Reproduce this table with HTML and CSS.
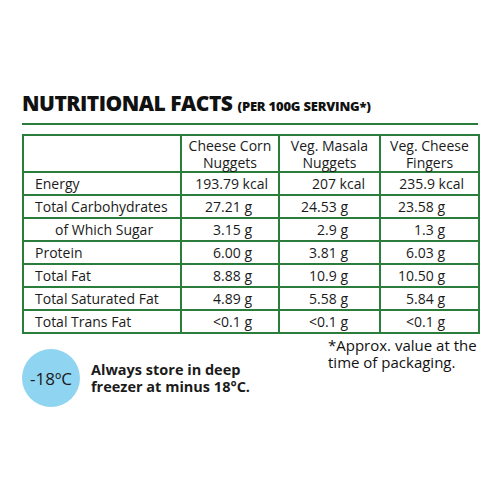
FILE: index.html
```html
<!DOCTYPE html>
<html>
<head>
<meta charset="utf-8">
<link rel="stylesheet" href="styles.css">
</head>
<body>
<div class="page">
  <h1 class="title">NUTRITIONAL FACTS <span class="sub">(PER 100G SERVING*)</span></h1>
  <div class="rule"></div>
  <table class="facts">
    <colgroup>
      <col class="c1"><col class="c2"><col class="c3"><col class="c4">
    </colgroup>
    <thead>
      <tr>
        <th></th>
        <th>Cheese Corn<br>Nuggets</th>
        <th>Veg. Masala<br>Nuggets</th>
        <th>Veg. Cheese<br>Fingers</th>
      </tr>
    </thead>
    <tbody>
      <tr class="energy"><td>Energy</td><td>193.79 kcal</td><td>207 kcal</td><td>235.9 kcal</td></tr>
      <tr><td>Total Carbohydrates</td><td>27.21 g</td><td>24.53 g</td><td>23.58 g</td></tr>
      <tr><td class="indent">of Which Sugar</td><td>3.15 g</td><td>2.9 g</td><td>1.3 g</td></tr>
      <tr><td>Protein</td><td>6.00 g</td><td>3.81 g</td><td>6.03 g</td></tr>
      <tr><td>Total Fat</td><td>8.88 g</td><td>10.9 g</td><td>10.50 g</td></tr>
      <tr><td>Total Saturated Fat</td><td>4.89 g</td><td>5.58 g</td><td>5.84 g</td></tr>
      <tr><td>Total Trans Fat</td><td>&lt;0.1 g</td><td>&lt;0.1 g</td><td>&lt;0.1 g</td></tr>
    </tbody>
  </table>
  <div class="bottom">
    <div class="store">
      <div class="temp">-18ºC</div>
      <p class="store-text">Always store in deep<br>freezer at minus 18°C.</p>
    </div>
    <p class="note">*Approx. value at the<br>time of packaging.</p>
  </div>
</div>
</body>
</html>
```
FILE: styles.css
```css
html, body {
  margin: 0;
  padding: 0;
  background: #ffffff;
}
body {
  font-family: "Open Sans", "Noto Sans", sans-serif;
  color: #1b1b1b;
}
.page {
  width: 456px;
  padding: 90px 0 0 22px;
}
.title {
  margin: 0;
  font-size: 21px;
  font-weight: 800;
  line-height: 26px;
  letter-spacing: -0.5px;
  color: #111;
}
.sub {
  font-size: 13px;
  font-weight: 800;
  letter-spacing: -0.2px;
}
.rule {
  height: 2px;
  background: #2b7d3c;
  margin-top: 4px;
  width: 456px;
}
.facts {
  margin-top: 9px;
  width: 456px;
  table-layout: fixed;
  border-collapse: collapse;
  border: 2px solid #2b7d3c;
  font-size: 14px;
}
.c1 { width: 158px; }
.c2 { width: 98px; }
.c3 { width: 101px; }
.c4 { width: 99px; }
.facts th, .facts td {
  border: 2px solid #2b7d3c;
  padding: 0;
}
.facts th {
  height: 35px;
  font-weight: 400;
  line-height: 17px;
  text-align: center;
  vertical-align: middle;
}
.facts td {
  height: 21px;
  line-height: 18px;
  text-align: right;
}
.facts td:first-child {
  text-align: left;
  padding-left: 11px;
}
.facts td.indent {
  padding-left: 31px;
}
.facts td:nth-child(2) { padding-right: 26px; }
.facts td:nth-child(3) { padding-right: 31px; }
.facts td:nth-child(4) { padding-right: 33px; }
.facts tr.energy td:nth-child(2) { padding-right: 10px; }
.facts tr.energy td:nth-child(3) { padding-right: 14px; }
.facts tr.energy td:nth-child(4) { padding-right: 14px; }
.bottom {
  display: flex;
  justify-content: space-between;
  align-items: flex-start;
  margin-top: 3px;
}
.store {
  display: flex;
  align-items: center;
  margin-top: 12px;
  gap: 11px;
}
.temp {
  width: 58px;
  height: 58px;
  border-radius: 50%;
  background: #8fd4f1;
  display: flex;
  align-items: center;
  justify-content: center;
  font-size: 17px;
  color: #1b1b1b;
}
.store-text {
  margin: 0;
  font-size: 14.5px;
  font-weight: 700;
  line-height: 17px;
}
.note {
  margin: 0;
  width: 150px;
  font-size: 15px;
  line-height: 17px;
  color: #111;
}
```
